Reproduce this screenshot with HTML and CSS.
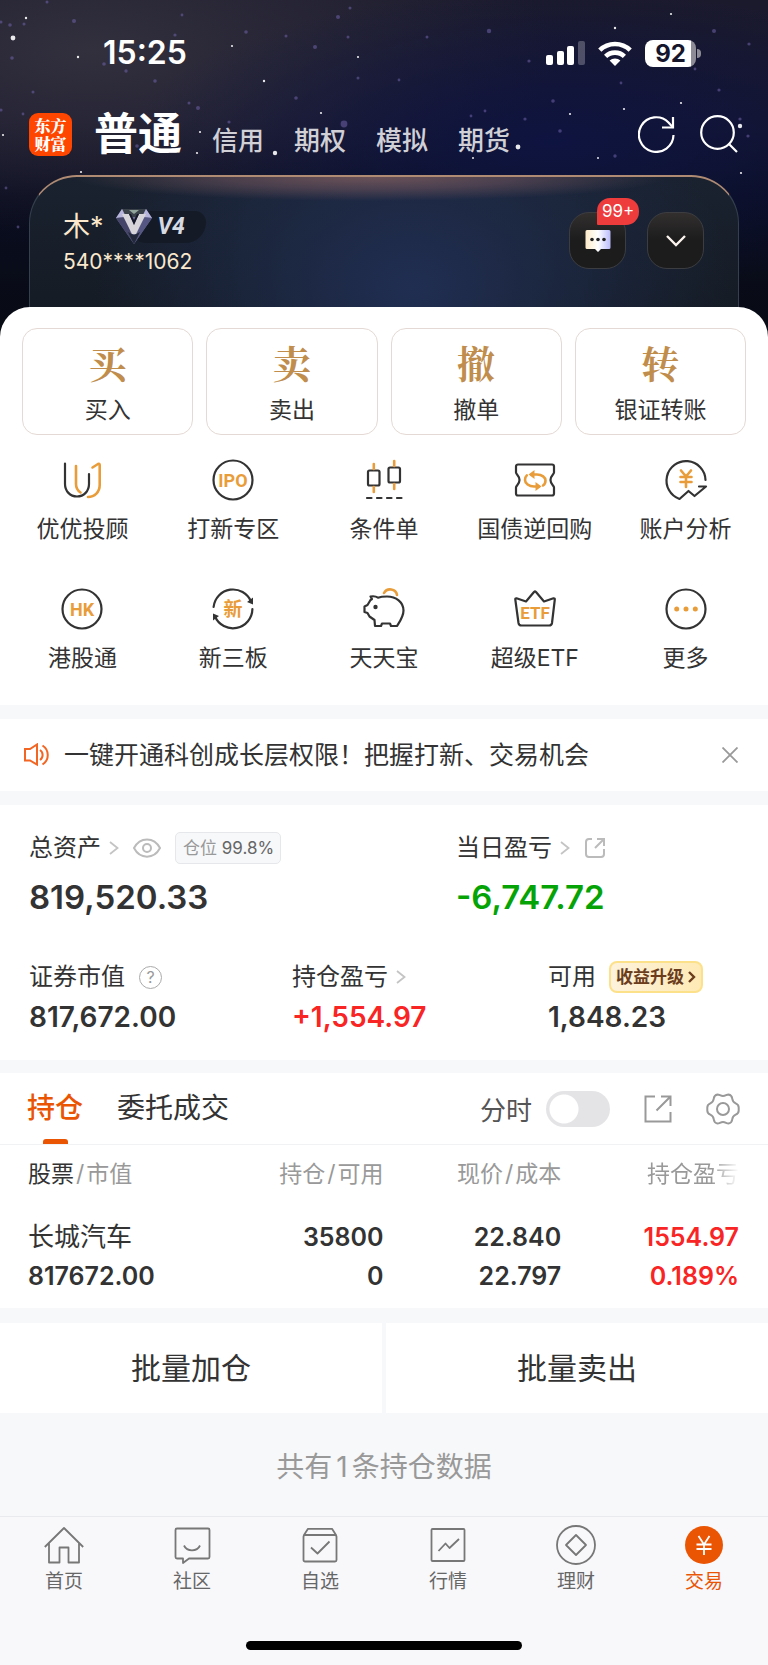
FILE: index.html
```html
<!DOCTYPE html>
<html lang="zh-CN">
<head>
<meta charset="utf-8">
<meta name="viewport" content="width=device-width, initial-scale=1">
<title>交易</title>
<link rel="stylesheet" href="styles.css">
</head>
<body>
<header class="hero">
  <svg class="stars" viewBox="0 0 768 337" preserveAspectRatio="xMidYMin slice" aria-hidden="true">
    <g fill="#fff" opacity=".9">
      <circle cx="13" cy="38" r="2.4"/><circle cx="26" cy="18" r="1.2"/><circle cx="78" cy="57" r="1.2"/><circle cx="232" cy="46" r="1.1"/><circle cx="358" cy="57" r="1.1"/><circle cx="264" cy="81" r="1.2"/><circle cx="321" cy="113" r="1.1"/><circle cx="3" cy="135" r="1.1"/><circle cx="200" cy="132" r="1.1"/><circle cx="197" cy="153" r="1.1"/><circle cx="275" cy="153" r="2.2"/><circle cx="615" cy="28" r="1.2"/><circle cx="671" cy="14" r="1.1"/><circle cx="681" cy="103" r="1.1"/><circle cx="740" cy="126" r="2.2"/><circle cx="518" cy="147" r="2.4"/><circle cx="570" cy="114" r="1.1"/><circle cx="624" cy="109" r="1.1"/><circle cx="598" cy="158" r="1"/><circle cx="473" cy="158" r="1"/><circle cx="741" cy="173" r="1.1"/><circle cx="81" cy="172" r="1.1"/>
    </g>
    <g fill="#6f62a8" opacity=".55">
      <circle cx="74" cy="21" r="2"/><circle cx="10" cy="25" r="1.8"/><circle cx="24" cy="24" r="1.5"/><circle cx="1" cy="22" r="1.5"/><circle cx="12" cy="58" r="1.8"/><circle cx="47" cy="2" r="1.5"/><circle cx="104" cy="64" r="1.8"/><circle cx="126" cy="71" r="1.7"/><circle cx="155" cy="81" r="1.8"/><circle cx="175" cy="35" r="1.6"/><circle cx="182" cy="15" r="1.4"/><circle cx="246" cy="32" r="1.8"/><circle cx="286" cy="36" r="1.5"/><circle cx="315" cy="47" r="2"/><circle cx="338" cy="17" r="2"/><circle cx="350" cy="8" r="1.5"/><circle cx="348" cy="37" r="1.5"/><circle cx="33" cy="92" r="1.5"/><circle cx="198" cy="108" r="2"/><circle cx="189" cy="103" r="1.5"/><circle cx="296" cy="98" r="1.8"/><circle cx="344" cy="124" r="3.4"/><circle cx="358" cy="78" r="1.5"/><circle cx="229" cy="122" r="1.6"/><circle cx="23" cy="114" r="1.4"/><circle cx="1" cy="110" r="1.6"/><circle cx="137" cy="146" r="1.8"/><circle cx="18" cy="227" r="1.4"/><circle cx="6" cy="188" r="1.4"/><circle cx="489" cy="31" r="2.2"/><circle cx="427" cy="37" r="1.5"/><circle cx="529" cy="61" r="1.6"/><circle cx="399" cy="80" r="1.4"/><circle cx="553" cy="101" r="1.8"/><circle cx="560" cy="131" r="1.8"/><circle cx="525" cy="119" r="1.6"/><circle cx="485" cy="111" r="1.4"/><circle cx="471" cy="116" r="1.4"/><circle cx="714" cy="31" r="2"/><circle cx="749" cy="44" r="1.6"/><circle cx="719" cy="90" r="1.6"/><circle cx="695" cy="69" r="1.4"/><circle cx="621" cy="83" r="1.4"/><circle cx="615" cy="156" r="1.7"/><circle cx="748" cy="136" r="1.6"/><circle cx="740" cy="119" r="1.6"/>
    </g>
  </svg>
  <div class="status">
    <span class="clock">15:25</span>
    <span class="status-icons">
      <svg width="39" height="24" viewBox="0 0 39 24" fill="#fff" aria-label="信号"><rect y="14" width="7" height="10" rx="2"/><rect x="11" y="10" width="7" height="14" rx="2"/><rect x="21" y="5" width="7" height="19" rx="2"/><rect x="32" width="7" height="24" rx="2" opacity=".25"/></svg>
      <svg width="34" height="25" viewBox="0 0 34 25" fill="none" stroke="#fff" stroke-width="4.6" aria-label="无线网络"><path d="M1.8 9.2a21.8 21.8 0 0 1 30.4 0"/><path d="M7.6 15.4a13.6 13.6 0 0 1 18.8 0"/><path d="M17 25l-5.4-5.4a7.7 7.7 0 0 1 10.8 0z" fill="#fff" stroke="none"/></svg>
      <span class="battery"><span class="battery-level">92</span></span>
    </span>
  </div>
  <nav class="accounts">
    <span class="logo">东方<br>财富</span>
    <div class="account-links">
      <a class="on" href="#">普通</a><a href="#">信用</a><a href="#">期权</a><a href="#">模拟</a><a href="#">期货</a>
    </div>
    <button class="plain" aria-label="刷新"><svg width="38" height="38" viewBox="0 0 38 38" fill="none" stroke="#fff" stroke-width="2.2"><path d="M35.500 20a17.300 17.300 0 1 1-5-12.600l4.500 5"/><path d="M35 2v10.500H24"/></svg></button>
    <button class="plain" aria-label="搜索"><svg width="38" height="38" viewBox="0 0 38 38" fill="none" stroke="#fff" stroke-width="2.2"><circle cx="17.500" cy="17.500" r="16.300"/><path d="M28.500 28.500l8.500 8.500"/></svg></button>
  </nav>
  <section class="user-card">
    <div class="user">
      <div class="user-name">木*
        <span class="level">
          <svg width="36" height="37" viewBox="0 0 36 37"><path d="M6 1h24l6 9-18 26L0 10z" fill="#6c6c92"/><path d="M6 1h24l-4 8H10z" fill="#3b4148"/><path d="M6 1l4 8-10 1zM30 1l-4 8 10 1z" fill="#b7b5dc"/><path d="M0 10l10-1 8 27z" fill="#45456a"/><path d="M36 10l-10-1-8 27z" fill="#565682"/><path d="M12 24l6 12 6-12-6 3z" fill="#23283a"/><path d="M13 2h10l-5 4z" fill="#92a59c"/><path d="M6 6h7l5 11 5-11h7L20 26h-4z" fill="#d8d5da"/><path d="M13 6l5 11 5-11h-2l-3 6-3-6z" fill="#15182a"/></svg>
          <b>V4</b>
        </span>
      </div>
      <div class="user-id">540****1062</div>
    </div>
    <div class="card-buttons">
      <button class="dark" aria-label="消息"><svg width="26" height="23" viewBox="0 0 26 23"><defs><linearGradient id="msg"><stop offset="0" stop-color="#fdebc8"/><stop offset=".5" stop-color="#fff"/><stop offset="1" stop-color="#b9bcfa"/></linearGradient></defs><path d="M2 1h22a1.500 1.500 0 0 1 1.500 1.500v16A1.500 1.500 0 0 1 24 20h-8l-3 3-3-3H2a1.500 1.500 0 0 1-1.500-1.500v-16A1.500 1.500 0 0 1 2 1z" fill="url(#msg)"/><g fill="#222"><circle cx="7" cy="10.500" r="1.800"/><circle cx="13" cy="10.500" r="1.800"/><circle cx="19" cy="10.500" r="1.800"/></g></svg><span class="count">99+</span></button>
      <button class="dark" aria-label="展开"><svg width="20" height="12" viewBox="0 0 20 12" fill="none" stroke="#fbf3ec" stroke-width="2.400"><path d="M1 1l9 9 9-9"/></svg></button>
    </div>
  </section>
</header>

<main>
  <section class="sheet">
    <div class="actions">
      <button><span class="seal">买</span>买入</button>
      <button><span class="seal">卖</span>卖出</button>
      <button><span class="seal">撤</span>撤单</button>
      <button><span class="seal">转</span>银证转账</button>
    </div>
    <div class="features">
      <a href="#"><svg class="ico" viewBox="0 0 44 44"><path d="M5 5.500V26c0 7 5 12.500 12 12.500S29 33 29 26V16"/><g class="o"><path d="M16 8v18c0 4 1.500 6.500 4.500 8.500"/><path d="M32.500 9.500L38 6c1-.5 1.700 0 1.700 1v20c0 7-5 12-11.700 12"/></g></svg>优优投顾</a>
      <a href="#"><svg class="ico" viewBox="0 0 44 44"><circle cx="22" cy="22" r="19.500"/><text x="22" y="28.500">IPO</text></svg>打新专区</a>
      <a href="#"><svg class="ico" viewBox="0 0 44 44"><rect x="6" y="12.500" width="11.500" height="15" rx="1.500"/><rect x="26.500" y="9.500" width="11.500" height="15" rx="1.500"/><path d="M5 40h4.500M15 40h4.500M25 40h4.500M35 40h4.500"/><path class="o" d="M11.800 6v5M11.800 29v5M32.200 3v5M32.200 26v5"/></svg>条件单</a>
      <a href="#"><svg class="ico" viewBox="0 0 44 44"><path d="M5 6.500h34a2 2 0 0 1 2 2v6c0 2-3.500 3-3.500 7.500s3.500 5.500 3.500 7.500v6a2 2 0 0 1-2 2H5a2 2 0 0 1-2-2v-6c0-2 3.500-3 3.500-7.500S3 16.500 3 14.500v-6a2 2 0 0 1 2-2z"/><path class="o" d="M18 16.500h6c5 0 8.500 3 8.500 6 0 2-1 4-2.500 5M26 28.500h-5c-5 0-9-3-9-6.500 0-1.800.6-3.500 1.800-4.600"/><path class="of" d="M15.500 16.500l6-4.500v9zM28.500 28.500l-6 4.500v-9z"/></svg>国债逆回购</a>
      <a href="#"><svg class="ico" viewBox="0 0 44 44"><path d="M41.500 22A19.500 19.500 0 1 0 15.500 41l9-8 6 5L42 28.500h-7"/><path class="o" d="M17 12.500l5 6 5-6M22 18.500V29M16.500 19h11M16.500 24h11"/></svg>账户分析</a>
      <a href="#"><svg class="ico" viewBox="0 0 44 44"><circle cx="22" cy="22" r="19.500"/><text x="22" y="28.500">HK</text></svg>港股通</a>
      <a href="#"><svg class="ico" viewBox="0 0 44 44"><path d="M2.600 20A19.500 19.500 0 0 1 40 14.500M41.400 22A19.500 19.500 0 0 1 4 29.500"/><path class="d" d="M42 10.500v7l-6-2.500zM2 33.500v-7l6 2.500z"/><text x="22" y="29" class="hz">新</text></svg>新三板</a>
      <a href="#"><svg class="ico" viewBox="0 0 44 44"><path d="M8.500 9.500c3-.6 5.500-.2 7.500 1.200 2-.8 5-1.200 9-1.200 9 0 16.500 5.500 16.500 14 0 6-3 10-6.500 15.500h-6l-1-2.500h-8l-1 2.500h-6L12.500 33l-5-3.500-2-3.500-3-1v-5.500l3-1.500 3-5 1.500-1z"/><circle class="d" cx="13.500" cy="20" r="2.200"/><path class="o" d="M22 6c3-5.500 12-4.500 13 2"/></svg>天天宝</a>
      <a href="#"><svg class="ico" viewBox="0 0 44 44"><path d="M3.500 11.300l9.500 3.200 8-9.500q1-1 2 0l8 9.500 9.500-3.200q1.500-.3 1.300 1.200L39 36a3 3 0 0 1-3 2.500H8.500a3 3 0 0 1-3-2.500L2.300 12.500q-.2-1.500 1.200-1.200z"/><text x="22" y="32" class="sm">ETF</text></svg>超级ETF</a>
      <a href="#"><svg class="ico" viewBox="0 0 44 44"><circle cx="22" cy="22" r="19.500"/><g class="of"><circle cx="12.700" cy="22" r="2.500"/><circle cx="22" cy="22" r="2.500"/><circle cx="31.300" cy="22" r="2.500"/></g></svg>更多</a>
    </div>
  </section>

  <section class="notice">
    <svg width="26" height="24" viewBox="0 0 26 24" fill="none" stroke="#f26522" stroke-width="2"><path d="M1 6h5l7-4.500v20L6 17.500H1z"/><path d="M16 7c3.500 2.500 3.500 7.500 0 10M18.500 2.500c7 4.500 7 14.500 0 19"/></svg>
    <p>一键开通科创成长层权限！把握打新、交易机会</p>
    <button class="plain" aria-label="关闭"><svg width="16" height="16" viewBox="0 0 16 16" stroke="#999" stroke-width="1.800"><path d="M.5.5l15 15M15.500.5l-15 15"/></svg></button>
  </section>

  <section class="assets">
    <div class="totals">
      <div>
        <div class="label"><a href="#">总资产<svg class="chev" viewBox="0 0 10 14"><path d="M1 1l7.500 6L1 13"/></svg></a>
          <button class="plain" aria-label="隐藏金额"><svg class="grey" width="28" height="20" viewBox="0 0 28 20"><path d="M1 10C7-1.500 21-1.500 27 10 21 21.500 7 21.500 1 10z"/><circle cx="14" cy="10" r="4"/></svg></button>
          <span class="ratio">仓位 <span>99.8%</span></span></div>
        <div class="big">819,520.33</div>
      </div>
      <div>
        <div class="label"><a href="#">当日盈亏<svg class="chev" viewBox="0 0 10 14"><path d="M1 1l7.500 6L1 13"/></svg></a>
          <button class="plain" aria-label="分享盈亏"><svg class="grey" width="22" height="22" viewBox="0 0 22 22"><path d="M8 2H5a3 3 0 0 0-3 3v12a3 3 0 0 0 3 3h12a3 3 0 0 0 3-3v-5M13 2h7v7M20 2l-9 9"/></svg></button></div>
        <div class="big down">-6,747.72</div>
      </div>
    </div>
    <div class="details">
      <div>
        <div class="label">证券市值<button class="help" aria-label="说明">?</button></div>
        <div class="value">817,672.00</div>
      </div>
      <div>
        <div class="label"><a href="#">持仓盈亏<svg class="chev" viewBox="0 0 10 14"><path d="M1 1l7.500 6L1 13"/></svg></a></div>
        <div class="value up">+1,554.97</div>
      </div>
      <div>
        <div class="label">可用<a class="upgrade" href="#">收益升级<svg width="8" height="12" viewBox="0 0 8 12" fill="none" stroke="#6b3d1c" stroke-width="2.400"><path d="M1 1l5 5-5 5"/></svg></a></div>
        <div class="value">1,848.23</div>
      </div>
    </div>
  </section>

  <section class="positions">
    <div class="tabs">
      <button class="tab on">持仓</button>
      <button class="tab">委托成交</button>
      <div class="tools">
        <label class="switch" for="intraday">分时<input type="checkbox" role="switch" id="intraday"></label>
        <button class="plain" aria-label="分享"><svg class="tool" width="28" height="28" viewBox="0 0 28 28"><path d="M11 1.500H1.500v25h25V17M17 1.500h9.500V11M26.500 1.500L12.500 15.500"/></svg></button>
        <button class="plain" aria-label="设置"><svg class="tool" width="34" height="34" viewBox="0 0 34 34"><path d="M11.500 2.500c2 0 3 1.500 5.500 1.500s3.500-1.500 5.500-1.500c2.500.5 3.500 2 3.700 4 .3 2.500 1.300 3.800 3.500 4.800 2 .9 3 2 3 4.200v3c0 2.200-1 3.300-3 4.200-2.200 1-3.200 2.300-3.500 4.800-.2 2-1.200 3.500-3.700 4-2 0-3-1.500-5.500-1.500s-3.500 1.500-5.500 1.500c-2.500-.5-3.500-2-3.700-4-.3-2.500-1.300-3.800-3.500-4.800-2-.9-3-2-3-4.200v-3c0-2.200 1-3.300 3-4.200 2.200-1 3.200-2.300 3.500-4.800.2-2 1.200-3.500 3.700-4z"/><circle cx="17" cy="17" r="6"/></svg></button>
      </div>
    </div>
    <table>
      <thead><tr><th><b>股票</b><i>/</i>市值</th><th>持仓<i>/</i>可用</th><th>现价<i>/</i>成本</th><th><span class="fade">持仓盈亏</span></th></tr></thead>
      <tbody><tr><td><span class="stock">长城汽车</span><br>817672.00</td><td>35800<br>0</td><td>22.840<br>22.797</td><td class="up">1554.97<br>0.189%</td></tr></tbody>
    </table>
  </section>

  <div class="batch"><button>批量加仓</button><button>批量卖出</button></div>
  <p class="summary">共有<span>1</span>条持仓数据</p>
</main>

<footer class="dock">
  <nav class="tabbar">
    <a href="#"><svg viewBox="0 0 40 40"><path d="M.8 22L20 3l19.200 19M5 18.500v19h10.500v-15h9v15H35v-19"/></svg>首页</a>
    <a href="#"><svg viewBox="0 0 40 40"><path d="M5 3.500h31a1.500 1.500 0 0 1 1.500 1.500v27a1.500 1.500 0 0 1-1.500 1.500H17L11 38v-4.500H5A1.500 1.500 0 0 1 3.500 32V5A1.500 1.500 0 0 1 5 3.500zM12 20.500c3 6.500 13 6.500 16 0"/></svg>社区</a>
    <a href="#"><svg viewBox="0 0 40 40"><rect x="3.500" y="10" width="33" height="26.500" rx="1.500"/><path d="M4 10l4-6.200h24l4 6.200M11 22.500l6.500 6L29.500 16.500"/></svg>自选</a>
    <a href="#"><svg viewBox="0 0 40 40"><rect x="3.500" y="4" width="33" height="32" rx="1"/><path d="M10.500 26l7-7.500 4 4.500 9.500-9"/></svg>行情</a>
    <a href="#"><svg viewBox="0 0 40 40"><circle cx="20" cy="20" r="19"/><path d="M20 10l10 10-10 10-10-10z"/></svg>理财</a>
    <a class="on" href="#"><svg viewBox="0 0 40 40"><circle class="disc" cx="20" cy="20" r="19"/><path class="yen" d="M14.500 11l5.500 8.500 5.500-8.500M20 19.500V30M12.500 19.500h15M12.500 24h15"/></svg>交易</a>
  </nav>
  <div class="home-bar"></div>
</footer>
</body>
</html>
```
FILE: styles.css
```css
* { box-sizing: border-box; }
body { margin: 0; background: #f7f8fa; color: #333; font-family: "Inter", "Noto Sans CJK SC", sans-serif; font-size: 23px; }
a { color: inherit; text-decoration: none; }
button { font: inherit; color: inherit; border: 0; padding: 0; background: #fff; cursor: pointer; }
p { margin: 0; }
svg { display: block; flex: none; }
.plain { background: none; display: block; flex: none; }

/* Night sky header */
.hero {
  position: relative;
  padding-bottom: 1px;
  background:
    radial-gradient(ellipse 55% 45% at 72% 42%, #0e1440 0%, rgba(14, 20, 64, 0) 100%),
    radial-gradient(ellipse 60% 55% at 12% 15%, #32303d 0%, rgba(44, 41, 54, 0) 100%),
    linear-gradient(180deg, #1b1a2d 0%, #17162d 35%, #0a0d20 58%, #080b13 100%);
}
.stars { position: absolute; inset: 0; width: 100%; height: 100%; }
.status { position: relative; display: flex; justify-content: space-between; align-items: center; padding: 32px 67px 32px 103px; color: #fff; line-height: 42px; }
.clock { font-size: 32px; font-weight: 600; }
.status-icons { display: flex; align-items: center; gap: 13px; }
.battery { position: relative; width: 51px; height: 27px; margin-right: 5px; border-radius: 8px; background: linear-gradient(90deg, #fff 46px, #8d8c96 46px); text-align: center; }
.battery::after { content: ""; position: absolute; right: -5px; top: 9px; width: 4px; height: 9px; border-radius: 0 4px 4px 0; background: #8d8c96; }
.battery-level { display: block; color: #15162c; font-size: 24px; font-weight: 700; line-height: 27px; }
.accounts { position: relative; display: flex; align-items: center; gap: 24px; height: 56px; padding: 0 30px 0 29px; color: #fff; }
.logo { flex: none; width: 43px; height: 43px; padding-top: 4px; border-radius: 9px; background: #ff4600; font: 900 16px/18px "Noto Serif CJK SC", "Noto Sans CJK SC", sans-serif; text-align: center; }
.account-links { flex: 1; display: flex; align-items: baseline; gap: 30px; margin-left: -2px; padding-top: 7px; font-size: 26px; font-weight: 500; line-height: 56px; color: #d0d0d6; white-space: nowrap; }
.account-links .on { font-size: 44px; font-weight: 700; color: #fff; }

.user-card {
  position: relative;
  display: flex;
  justify-content: space-between;
  align-items: flex-start;
  min-height: 161px;
  margin: 13px 29px 0;
  padding: 31px 34px 0 33px;
  border: 1px solid #34404d;
  border-top: 2px solid #b08b74;
  border-radius: 48px 48px 0 0;
  background:
    radial-gradient(ellipse 42% 24px at 48% 0, rgba(140, 100, 98, .7) 0%, rgba(120, 88, 94, .5) 50%, rgba(110, 84, 94, 0) 100%),
    radial-gradient(ellipse 45% 150% at 54% 70%, #202e52 0%, rgba(32, 45, 78, 0) 100%),
    linear-gradient(180deg, #1a2230, #141a22);
  color: #fbe8cd;
}
.user-name { display: flex; align-items: center; gap: 12px; font-size: 27px; line-height: 34px; }
.user-id { margin-top: 3px; font-size: 21px; line-height: 28px; }
.level { display: flex; align-items: center; }
.level svg { position: relative; }
.level b { margin-left: -18px; padding: 0 21px 0 24px; border-radius: 0 12px 22px 12px; background: #151b26; color: #d5dae3; font: italic 700 23px/32px Roboto, sans-serif; }
.card-buttons { display: flex; gap: 21px; padding-top: 4px; }
.dark { position: relative; display: flex; align-items: center; justify-content: center; width: 57px; height: 57px; border: 1px solid #3c3d40; border-radius: 20px; background: linear-gradient(180deg, #322f2e, #1c1c1d 50%); }
.count { position: absolute; left: 27px; top: -15px; padding: 0 5px; border-radius: 13px 13px 13px 1px; background: #ee3b3b; color: #fff; font-size: 17px; line-height: 27px; }

/* Quick actions */
.sheet { position: relative; margin-top: -30px; padding: 21px 0 25px; border-radius: 30px 30px 0 0; background: #fff; }
.actions { display: grid; grid-template-columns: repeat(4, 1fr); gap: 13px; padding: 0 22px; }
.actions button { padding: 10px 0 6px; border: 1px solid #e4d9d4; border-radius: 15px; font-size: 23px; line-height: 36px; }
.seal { display: block; margin-bottom: 7px; color: #c08d4c; font: 700 38px/46px "Noto Serif CJK SC", "Noto Serif SC", "Noto Sans CJK SC", serif; }
.features { display: grid; grid-template-columns: repeat(5, 1fr); row-gap: 36px; padding: 23px 7px 0; }
.features a { display: flex; flex-direction: column; align-items: center; gap: 5px; line-height: 44px; white-space: nowrap; }
.ico { width: 44px; height: 44px; fill: none; stroke: #333; stroke-width: 2.200; stroke-linecap: round; stroke-linejoin: round; }
.ico .o { stroke: #e99d3a; stroke-width: 2.600; fill: none; }
.ico .of { fill: #e99d3a; stroke: none; }
.ico .d { fill: #333; stroke: none; }
.ico text { fill: #e99d3a; stroke: none; font: 700 18px Roboto, sans-serif; text-anchor: middle; }
.ico .sm { font-size: 17px; }
.ico .hz { font: 700 19px "Noto Sans CJK SC", sans-serif; }

.notice { display: flex; align-items: center; margin: 14px 0; padding: 0 30px 0 24px; background: #fff; font-size: 25px; line-height: 72px; }
.notice p { flex: 1; margin-left: 14px; white-space: nowrap; }

/* Assets */
.assets { padding: 26px 30px 26px 29px; background: #fff; }
.totals { display: grid; grid-template-columns: 427fr 282fr; }
.details { display: grid; grid-template-columns: 263fr 256fr 190fr; margin-top: 39px; }
.label { display: flex; align-items: center; gap: 14px; font-size: 24px; line-height: 34px; white-space: nowrap; }
.label a { display: flex; align-items: center; gap: 8px; }
.chev { width: 10px; height: 14px; fill: none; stroke: #c4c4c4; stroke-width: 1.800; }
.grey { fill: none; stroke: #bbb; stroke-width: 2; }
.ratio { height: 32px; padding: 0 6px 0 7px; border: 1px solid #e6e7ea; border-radius: 5px; background: #f7f8fa; color: #999; font-size: 17px; line-height: 30px; }
.ratio span { color: #666; }
.big { margin-top: 8px; font-size: 33px; font-weight: 600; line-height: 48px; }
.value { margin-top: 6px; font-size: 28px; font-weight: 600; line-height: 34px; }
.down { color: #05a305; }
.up { color: #f92424; }
.help { width: 23px; height: 23px; border: 1px solid #aaa; border-radius: 50%; color: #999; font-size: 16px; line-height: 21px; }
.label .upgrade { gap: 4px; margin-left: -1px; padding: 0 5px; border: 2px solid #fde08a; border-radius: 8px; background: linear-gradient(90deg, #fdf2dc, #feeab5); color: #6b3d1c; font-size: 17px; font-weight: 700; line-height: 28px; }

/* Positions */
.positions { margin-top: 13px; background: #fff; }
.tabs { display: flex; align-items: center; gap: 34px; padding: 0 28px 0 27px; border-bottom: 1px solid #f1f2f4; }
.tab { position: relative; font-size: 28px; line-height: 71px; }
.tab.on { color: #ea5504; font-weight: 500; }
.tab.on::after { content: ""; position: absolute; left: 50%; bottom: 0; width: 25px; height: 5px; margin-left: -12px; border-radius: 3px 3px 0 0; background: #ea5504; }
.tools { display: flex; align-items: center; gap: 34px; margin-left: auto; }
.switch { display: flex; align-items: center; gap: 14px; font-size: 26px; color: #555; }
.switch input { appearance: none; width: 64px; height: 36px; margin: 0; border-radius: 18px; background: radial-gradient(circle at 18px 18px, #fff 14px, #e4e4e7 15px); }
.tool { fill: none; stroke: #999; stroke-width: 2; }
table { width: 100%; padding: 0 29px 12px 28px; border-spacing: 0; table-layout: fixed; }
th, td { padding: 0; text-align: right; white-space: nowrap; }
th:first-child, td:first-child { text-align: left; }
th { padding-top: 14px; color: #999; font-size: 23px; font-weight: 400; line-height: 30px; }
th b { color: #333; font-weight: 400; }
th i { margin: 0 2px; font-style: normal; }
.fade { display: inline-block; -webkit-mask-image: linear-gradient(90deg, #000 70%, transparent 100%); mask-image: linear-gradient(90deg, #000 70%, transparent 100%); }
td { padding-top: 29px; font-size: 25px; font-weight: 600; line-height: 39px; }
.stock { font-size: 26px; font-weight: 400; line-height: 1; }

.batch { display: grid; grid-template-columns: 1fr 1fr; gap: 4px; margin-top: 15px; }
.batch button { font-size: 30px; line-height: 90px; }
.summary { padding: 34px 0 29px; color: #999; font-size: 28px; line-height: 40px; text-align: center; }
.summary span { margin: 0 4px; }

/* Bottom navigation */
.dock { padding: 8px 0 15px; border-top: 1px solid #e8eaed; background: #f8f8fb; }
.tabbar { display: grid; grid-template-columns: repeat(6, 1fr); }
.tabbar a { display: flex; flex-direction: column; align-items: center; gap: 5px; color: #666; font-size: 19px; line-height: 24px; }
.tabbar svg { width: 40px; height: 40px; fill: none; stroke: #777; stroke-width: 1.800; stroke-linejoin: round; }
.tabbar .on { color: #ea5504; }
.tabbar .disc { fill: #ea5504; stroke: none; }
.tabbar .yen { stroke: #fff; }
.home-bar { width: 36%; height: 9px; margin: 47px auto 0; border-radius: 5px; background: #000; }
```
